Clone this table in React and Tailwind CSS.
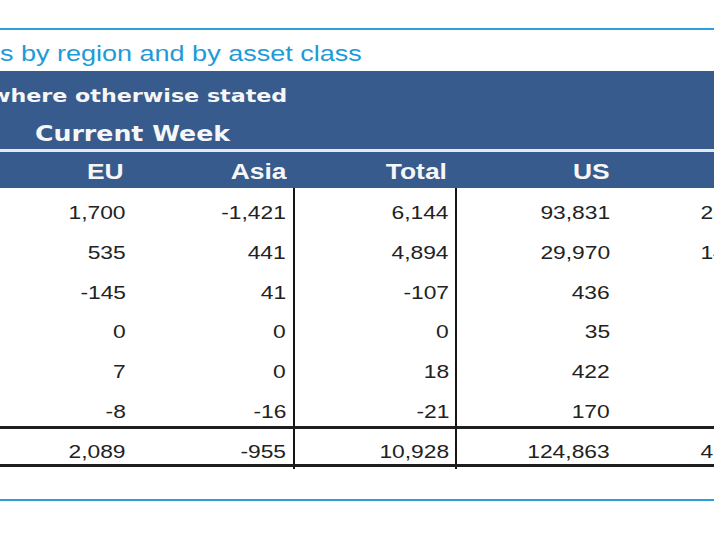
import React from "react";

const rows = [
  ["1,700", "-1,421", "6,144", "93,831", "23,517"],
  ["535", "441", "4,894", "29,970", "14,362"],
  ["-145", "41", "-107", "436", "-812"],
  ["0", "0", "0", "35", "12"],
  ["7", "0", "18", "422", "96"],
  ["-8", "-16", "-21", "170", "-58"],
];
const total = ["2,089", "-955", "10,928", "124,863", "41,205"];

function Num({ v }) {
  return <span className="inline-block origin-right scale-x-[1.2]">{v}</span>;
}

function Cells({ vals, pt }) {
  return (
    <>
      <div className={`w-[133px] shrink-0 pr-[7px] text-right ${pt}`}>
        <Num v={vals[0]} />
      </div>
      <div className={`w-[162px] shrink-0 pr-[7px] text-right border-r-2 border-[#151515] ${pt}`}>
        <Num v={vals[1]} />
      </div>
      <div className={`w-[162px] shrink-0 pr-[6px] text-right border-r-2 border-[#151515] ${pt}`}>
        <Num v={vals[2]} />
      </div>
      <div className={`w-[160px] shrink-0 pr-[7px] text-right ${pt}`}>
        <Num v={vals[3]} />
      </div>
      <div className={`w-[160px] shrink-0 pr-[7px] text-right ${pt}`}>
        <Num v={vals[4]} />
      </div>
    </>
  );
}

export default function App() {
  return (
    <div className="w-[714px] h-[536px] overflow-hidden bg-white font-['Liberation_Sans',Arial,sans-serif]">
      <div className="pt-[28px]">
        <div className="h-[2px] bg-[#2aa0dc]" />
      </div>
      <div className="h-[41px] flex items-end pb-[5.5px]">
        <span className="inline-block origin-left scale-x-[1.2] whitespace-nowrap text-[22.5px] leading-none text-[#1e9bd7]">
          s by region and by asset class
        </span>
      </div>

      <div className="h-[78px] bg-[#375b8d] text-[#f6f6f6] font-['DejaVu_Sans',Verdana,sans-serif] font-bold whitespace-nowrap">
        <div className="pt-[15.8px] -ml-[10px] text-[18.5px] leading-none">
          <span className="inline-block origin-left scale-x-[1.2]">where otherwise stated</span>
        </div>
        <div className="mt-[19px] pl-[35px] text-[21px] leading-none">
          <span className="inline-block origin-left scale-x-[1.2]">Current Week</span>
        </div>
      </div>
      <div className="h-[3px] bg-[#e4e9ef]" />
      <div className="h-[36px] bg-[#375b8d] flex text-[22px] leading-none font-bold text-[#f6f6f6] whitespace-nowrap">
        <div className="w-[133px] shrink-0 pt-[9.4px] pr-[9px] text-right">
          <Num v="EU" />
        </div>
        <div className="w-[162px] shrink-0 pt-[9.4px] pr-[9px] text-right">
          <Num v="Asia" />
        </div>
        <div className="w-[162px] shrink-0 pt-[9.4px] pr-[10px] text-right">
          <Num v="Total" />
        </div>
        <div className="w-[160px] shrink-0 pt-[9.4px] pr-[7px] text-right">
          <Num v="US" />
        </div>
      </div>

      <div className="text-[19px] leading-none text-[#222222] whitespace-nowrap">
        {rows.map((r, i) => (
          <div key={i} className="flex h-[39.7px]">
            <Cells vals={r} pt="pt-[15.4px]" />
          </div>
        ))}
        <div className="h-[2.8px] bg-[#1e1e1e]" />
        <div className="flex h-[35px]">
          <Cells vals={total} pt="pt-[12.9px]" />
        </div>
        <div className="h-[3px] bg-[#1e1e1e]" />
        <div className="flex h-[2px]">
          <div className="w-[133px] shrink-0" />
          <div className="w-[162px] shrink-0 border-r-2 border-[#151515]" />
          <div className="w-[162px] shrink-0 border-r-2 border-[#151515]" />
        </div>
      </div>

      <div className="h-[30px]" />
      <div className="h-[2px] bg-[#2aa0dc]" />
    </div>
  );
}
